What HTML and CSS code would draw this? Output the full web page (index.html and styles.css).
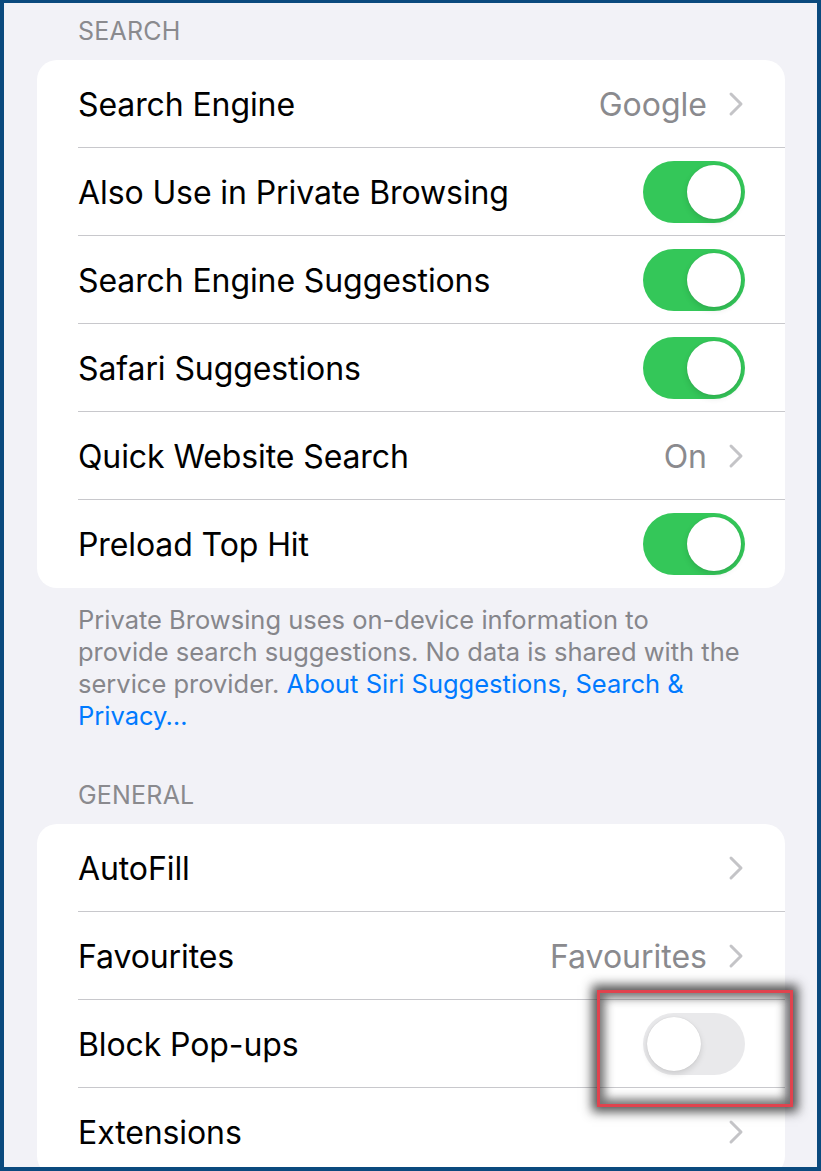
FILE: index.html
```html
<!DOCTYPE html>
<html>
<head>
<meta charset="utf-8">
<link rel="stylesheet" href="styles.css">
</head>
<body>
<div class="frame">
  <div class="section-header first">SEARCH</div>
  <div class="card">
    <div class="row"><span class="label">Search Engine</span><span class="detail"><span class="value">Google</span><svg class="chev" viewBox="0 0 16 26"><polyline points="3,3 13,13 3,23"/></svg></span></div>
    <div class="row"><span class="label">Also Use in Private Browsing</span><span class="toggle on"><span class="knob"></span></span></div>
    <div class="row"><span class="label">Search Engine Suggestions</span><span class="toggle on"><span class="knob"></span></span></div>
    <div class="row"><span class="label">Safari Suggestions</span><span class="toggle on"><span class="knob"></span></span></div>
    <div class="row"><span class="label">Quick Website Search</span><span class="detail"><span class="value">On</span><svg class="chev" viewBox="0 0 16 26"><polyline points="3,3 13,13 3,23"/></svg></span></div>
    <div class="row"><span class="label">Preload Top Hit</span><span class="toggle on"><span class="knob"></span></span></div>
  </div>
  <p class="footer">Private Browsing uses on-device information to<br>provide search suggestions. No data is shared with the<br>service provider. <span class="link">About Siri Suggestions, Search &amp;<br>Privacy…</span></p>
  <div class="section-header">GENERAL</div>
  <div class="card">
    <div class="row"><span class="label">AutoFill</span><span class="detail"><svg class="chev" viewBox="0 0 16 26"><polyline points="3,3 13,13 3,23"/></svg></span></div>
    <div class="row"><span class="label">Favourites</span><span class="detail"><span class="value">Favourites</span><svg class="chev" viewBox="0 0 16 26"><polyline points="3,3 13,13 3,23"/></svg></span></div>
    <div class="row highlight-row"><span class="label">Block Pop-ups</span><span class="toggle"><span class="knob"></span></span><span class="highlight"></span></div>
    <div class="row"><span class="label">Extensions</span><span class="detail"><svg class="chev" viewBox="0 0 16 26"><polyline points="3,3 13,13 3,23"/></svg></span></div>
  </div>
</div>
</body>
</html>
```
FILE: styles.css
```css
html, body {
  margin: 0;
  padding: 0;
}
body {
  font-family: Inter, "Liberation Sans", sans-serif;
  background: #0b4a7e;
}
.frame {
  box-sizing: border-box;
  width: 821px;
  height: 1171px;
  border: 4px solid #0b4a7e;
  border-top-width: 3px;
  background: #f2f2f7;
  overflow: hidden;
}
.section-header {
  margin: 48px 0 14px 74px;
  height: 30px;
  line-height: 30px;
  font-size: 25px;
  color: #8a8a8e;
  letter-spacing: 0.2px;
}
.section-header.first {
  margin-top: 13px;
}
.card {
  margin: 0 32px 0 33px;
  background: #fff;
  border-radius: 20px;
}
.row {
  position: relative;
  height: 88px;
  display: flex;
  align-items: center;
  justify-content: space-between;
  margin-left: 41px;
  padding-right: 40px;
  box-shadow: inset 0 -1px 0 #c8c8cc;
}
.row:last-child {
  box-shadow: none;
}
.label {
  font-size: 32px;
  color: #000;
  letter-spacing: -0.1px;
}
.detail {
  display: flex;
  align-items: center;
  gap: 21px;
}
.value {
  font-size: 32px;
  color: #8a8a8e;
}
.chev {
  width: 16px;
  height: 26px;
  margin-right: 1px;
}
.chev polyline {
  fill: none;
  stroke: #c4c4c7;
  stroke-width: 3;
  stroke-linecap: round;
  stroke-linejoin: round;
}
.toggle {
  position: relative;
  width: 102px;
  height: 62px;
  border-radius: 31px;
  background: #e9e9eb;
  flex: none;
}
.toggle.on {
  background: #34c759;
}
.knob {
  position: absolute;
  top: 4px;
  left: 4px;
  width: 54px;
  height: 54px;
  border-radius: 50%;
  background: #fff;
  box-shadow: 0 3px 6px rgba(0,0,0,0.12), 0 0 1px rgba(0,0,0,0.15);
}
.toggle.on .knob {
  left: 44px;
}
.footer {
  margin: 16px 40px 0 74px;
  font-size: 25.5px;
  line-height: 32px;
  color: #86868b;
}
.link {
  color: #007aff;
}
.highlight {
  position: absolute;
  left: 519px;
  top: -10px;
  width: 190px;
  height: 111px;
  border: 3px solid #e0434e;
  box-shadow: 0 0 10px 5px rgba(40,40,40,0.8), inset 0 0 10px 5px rgba(40,40,40,0.65);
  pointer-events: none;
}
```
